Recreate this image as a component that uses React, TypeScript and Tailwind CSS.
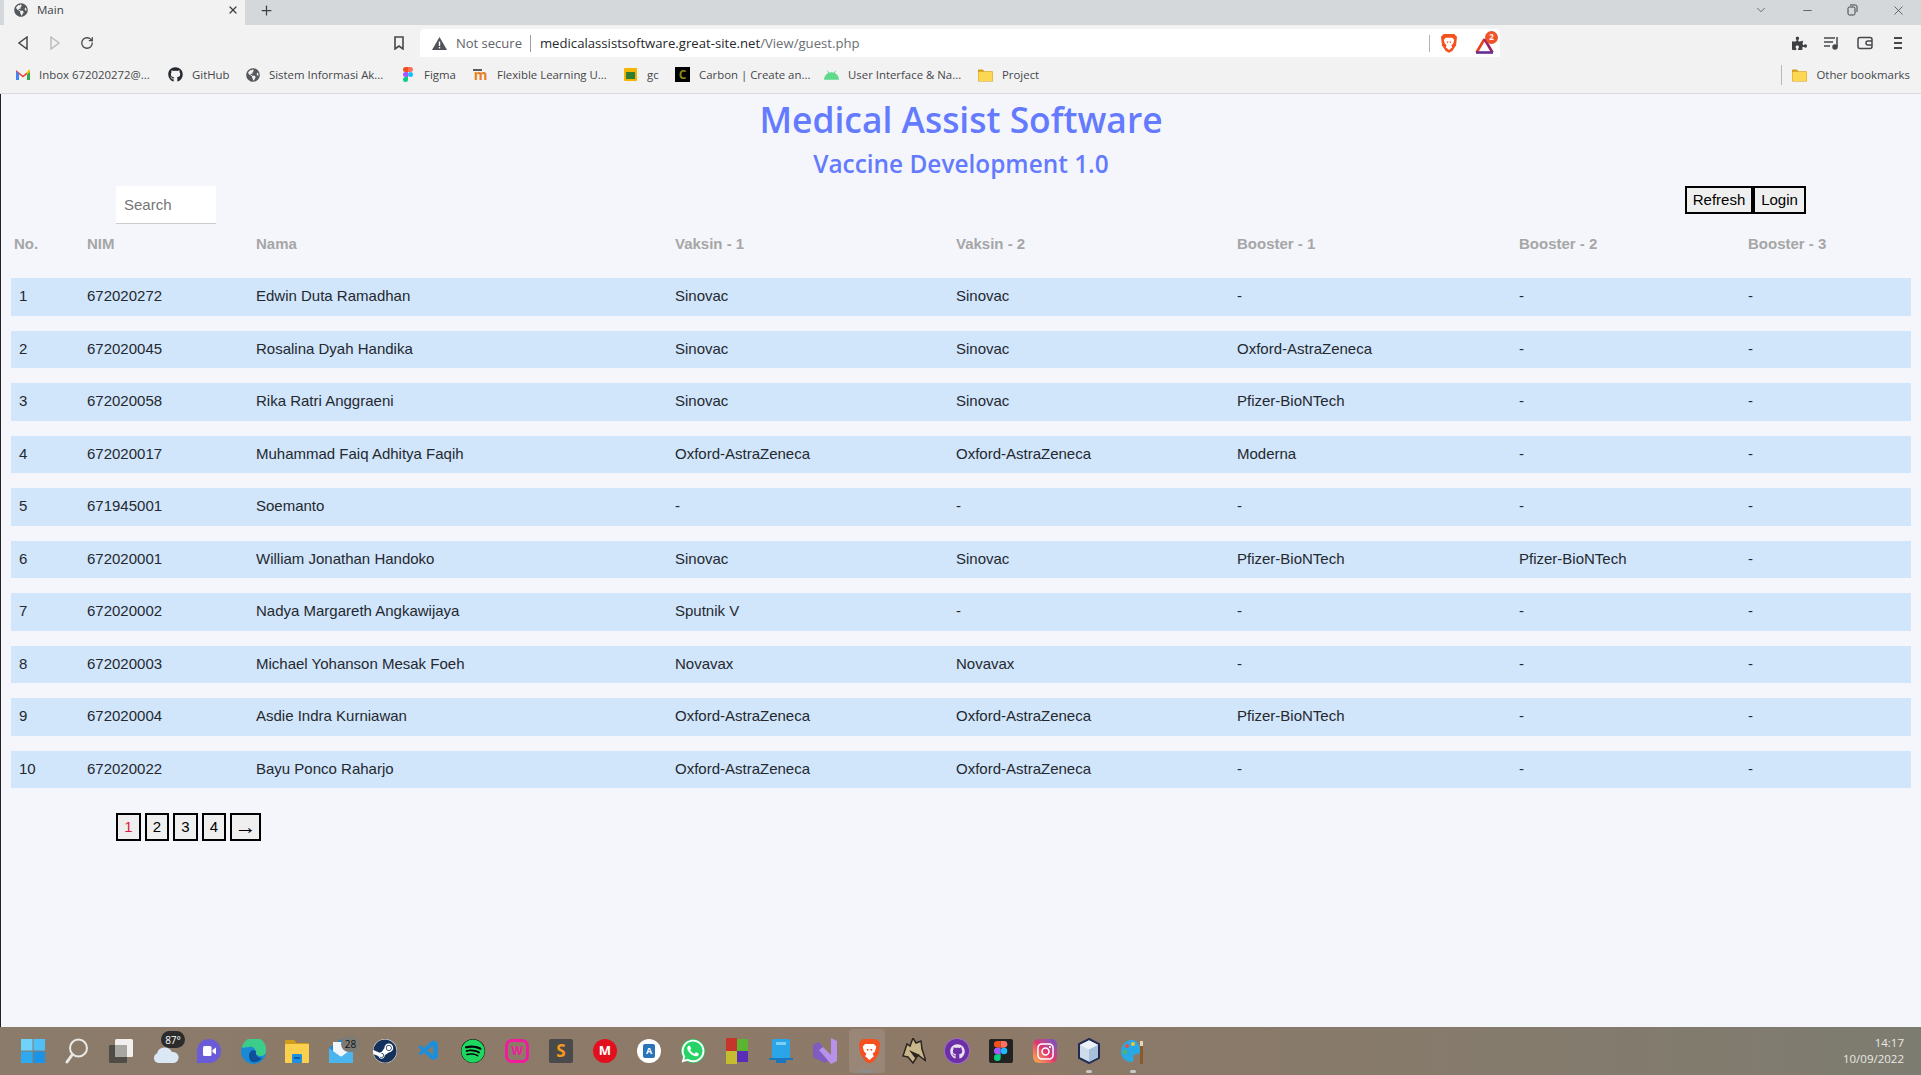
import type { ReactNode } from "react";
import { ChevronDown, Minus, Plus, RotateCw, X } from "lucide-react";
import {
  FaGithub,
  FaGlobeAmericas,
  FaPuzzlePiece,
  FaSteam,
  FaWhatsapp,
  FaInstagram,
  FaSpotify,
} from "react-icons/fa";
import { VscVscode } from "react-icons/vsc";

const rows = [
  ["1", "672020272", "Edwin Duta Ramadhan", "Sinovac", "Sinovac", "-", "-", "-"],
  ["2", "672020045", "Rosalina Dyah Handika", "Sinovac", "Sinovac", "Oxford-AstraZeneca", "-", "-"],
  ["3", "672020058", "Rika Ratri Anggraeni", "Sinovac", "Sinovac", "Pfizer-BioNTech", "-", "-"],
  ["4", "672020017", "Muhammad Faiq Adhitya Faqih", "Oxford-AstraZeneca", "Oxford-AstraZeneca", "Moderna", "-", "-"],
  ["5", "671945001", "Soemanto", "-", "-", "-", "-", "-"],
  ["6", "672020001", "William Jonathan Handoko", "Sinovac", "Sinovac", "Pfizer-BioNTech", "Pfizer-BioNTech", "-"],
  ["7", "672020002", "Nadya Margareth Angkawijaya", "Sputnik V", "-", "-", "-", "-"],
  ["8", "672020003", "Michael Yohanson Mesak Foeh", "Novavax", "Novavax", "-", "-", "-"],
  ["9", "672020004", "Asdie Indra Kurniawan", "Oxford-AstraZeneca", "Oxford-AstraZeneca", "Pfizer-BioNTech", "-", "-"],
  ["10", "672020022", "Bayu Ponco Raharjo", "Oxford-AstraZeneca", "Oxford-AstraZeneca", "-", "-", "-"],
];

const headers = ["No.", "NIM", "Nama", "Vaksin - 1", "Vaksin - 2", "Booster - 1", "Booster - 2", "Booster - 3"];
const columns = "grid grid-cols-[76px_169px_419px_281px_281px_282px_229px_163px] items-center";

function Folder() {
  return (
    <svg width="16" height="14" viewBox="0 0 16 14">
      <path d="M0 2a1 1 0 0 1 1-1h4l2 2h8a1 1 0 0 1 1 1v9a1 1 0 0 1-1 1H1a1 1 0 0 1-1-1z" fill="#d29c1c" />
      <rect x="0.5" y="3.5" width="15" height="10" rx="1" fill="#fbd752" />
    </svg>
  );
}

function Gmail() {
  return (
    <svg width="14" height="11" viewBox="0 0 14 11">
      <path d="M0 1 7 6.5 14 1V3L7 8.5 0 3z" fill="#ea4335" />
      <path d="M0 2V11H3V4.500z" fill="#4285f4" />
      <path d="M14 2V11H11V4.500z" fill="#34a853" />
      <path d="M11 3 13 0.600 14 1.500V3L11 5.500z" fill="#fbbc04" />
    </svg>
  );
}

function Figma({ size = 15 }: { size?: number }) {
  return (
    <svg width={(size * 2) / 3} height={size} viewBox="0 0 10 15">
      <path d="M5 0H2.500a2.500 2.500 0 0 0 0 5H5z" fill="#f24e1e" />
      <path d="M5 0h2.500a2.500 2.500 0 0 1 0 5H5z" fill="#ff7262" />
      <path d="M5 5H2.500a2.500 2.500 0 0 0 0 5H5z" fill="#a259ff" />
      <circle cx="7.500" cy="7.500" r="2.500" fill="#1abcfe" />
      <path d="M5 10H2.500A2.500 2.500 0 1 0 5 12.500z" fill="#0acf83" />
    </svg>
  );
}

function BraveLion({ size = 17 }: { size?: number }) {
  return (
    <svg width={size} height={(size * 20) / 17} viewBox="0 0 17 20">
      <path d="M3 0h11l3 3-1 9-4 6-3.500 2L5 18l-4-6L0 3z" fill="#f4511e" />
      <path d="M5 4h7l2 2-1 4-2 2 1 2-3.500 3L5 14l1-2-2-2-1-4z" fill="#fff" />
      <path d="M6 8h2l-1 2zM9 8h2l-1 2z" fill="#f4511e" />
    </svg>
  );
}

function BatIcon() {
  return (
    <div className="relative h-[20px] w-[20px]">
      <svg width="19" height="17" viewBox="0 0 19 17" className="absolute bottom-0 left-0" fill="none" strokeWidth="2.6">
        <path d="M9.500 2 1.500 15.500" stroke="#e8401c" />
        <path d="M9.500 2 17.500 15.500" stroke="#9e1f63" />
        <path d="M1 15.500H18" stroke="#662d91" />
      </svg>
      <span className="absolute -right-[3px] -top-[3px] flex h-[13px] w-[13px] items-center justify-center rounded-full bg-[#f0532a] text-[8px] font-bold text-white">
        2
      </span>
    </div>
  );
}

function Bookmark({ icon, label, width }: { icon: ReactNode; label: string; width: string }) {
  return (
    <div className={`flex items-center gap-[9px] ${width}`}>
      <span className="flex w-[15px] shrink-0 justify-center">{icon}</span>
      <span className="whitespace-nowrap text-[11.4px] text-[#45474a]">{label}</span>
    </div>
  );
}

function BrowserChrome() {
  return (
    <header className="font-['Open_Sans',sans-serif] border-b border-[#d8dae0]">
      {/* Tab strip */}
      <div className="flex h-[25px] items-center bg-[#d5d8db]">
        <div className="ml-[4px] flex h-full w-[241px] items-center bg-[#f2f2f2] pb-[5px] pl-[10px] pr-[6px]">
          <FaGlobeAmericas className="text-[14px] text-[#55585c]" />
          <span className="ml-[9px] flex-1 text-[11.5px] text-[#3c4043]">Main</span>
          <X size={12} strokeWidth={2.5} className="text-[#3c4043]" />
        </div>
        <Plus size={15} strokeWidth={2} className="mb-[5px] ml-[14px] text-[#3c4043]" />
        <div className="mb-[5px] ml-auto flex items-center gap-[33px] pr-[15px] text-[#3c4043]">
          <ChevronDown size={14} strokeWidth={1.2} />
          <Minus size={13} strokeWidth={1.4} />
          <svg width="11" height="12" viewBox="0 0 11 12" fill="none" stroke="#3c4043">
            <rect x="1" y="3" width="7" height="8" rx="1.5" />
            <path d="M3 1h5.500A1.500 1.500 0 0 1 10 2.500V8" />
          </svg>
          <X size={15} strokeWidth={1.2} />
        </div>
      </div>
      {/* Toolbar */}
      <div className="flex h-[32px] items-end bg-[#f2f2f2]">
        <div className="flex h-full w-[420px] items-center pl-[18px] pt-[4px]">
          <svg width="10" height="14" viewBox="0 0 10 14" fill="none" stroke="#46484b" strokeWidth="1.5">
            <path d="M9 1 1 7 9 13z" />
          </svg>
          <svg className="ml-[22px]" width="10" height="14" viewBox="0 0 10 14" fill="none" stroke="#bcbdbf" strokeWidth="1.5">
            <path d="M1 1 9 7 1 13z" />
          </svg>
          <RotateCw size={14} strokeWidth={2.2} className="ml-[20px] text-[#46484b]" />
          <svg className="ml-[300px]" width="10" height="14" viewBox="0 0 10 14" fill="none" stroke="#46484b" strokeWidth="1.6">
            <path d="M1 1h8v12L5 10l-4 3z" />
          </svg>
        </div>
        <div className="flex h-[28px] w-[1080px] items-center rounded-t-[5px] bg-white pl-[12px] pt-[1px] text-[13.15px]">
          <svg width="15" height="13" viewBox="0 0 15 13">
            <path d="M7.500 0 15 13H0z" fill="#505357" />
            <rect x="6.800" y="4.500" width="1.400" height="4.500" fill="#fff" />
            <rect x="6.800" y="10" width="1.400" height="1.400" fill="#fff" />
          </svg>
          <span className="ml-[9px] text-[13px] text-[#5f6368]">Not secure</span>
          <span className="ml-[8px] h-[17px] w-px bg-[#9a9ca0]" />
          <span className="ml-[9px] text-[#26282b]">medicalassistsoftware.great-site.net</span>
          <span className="text-[#6b6e72]">/View/guest.php</span>
          <span className="ml-auto h-[17px] w-px bg-[#b0b2b5]" />
          <span className="ml-[11px]">
            <BraveLion size={16} />
          </span>
          <span className="ml-[18px] mr-[5px]">
            <BatIcon />
          </span>
        </div>
        <div className="flex h-full flex-1 items-center gap-[17px] pl-[292px] pt-[4px] text-[#46484b]">
          <FaPuzzlePiece className="text-[15px] text-[#3d3f42]" />
          <svg width="16" height="14" viewBox="0 0 16 14" fill="none" stroke="#46484b" strokeWidth="1.5">
            <path d="M0 2h11M0 6h9M0 10h6M13 1v10" />
            <circle cx="11" cy="11" r="2" fill="#46484b" />
          </svg>
          <svg width="16" height="14" viewBox="0 0 16 14" fill="none" stroke="#46484b" strokeWidth="1.5">
            <rect x="1" y="1.500" width="14" height="11" rx="2" />
            <path d="M15 5h-4a2 2 0 0 0 0 4h4" />
          </svg>
          <svg className="ml-[2px]" width="12" height="14" viewBox="0 0 12 14" stroke="#46484b" strokeWidth="2">
            <path d="M2 2h8M2 7h8M2 12h8" />
          </svg>
        </div>
      </div>
      {/* Bookmarks bar */}
      <div className="flex h-[36px] items-center bg-[#f2f2f2] pl-[15px]">
        <Bookmark width="w-[153px]" icon={<Gmail />} label="Inbox 672020272@..." />
        <Bookmark width="w-[77px]" icon={<FaGithub className="text-[15px] text-[#24292f]" />} label="GitHub" />
        <Bookmark width="w-[155px]" icon={<FaGlobeAmericas className="text-[14px] text-[#55585c]" />} label="Sistem Informasi Ak..." />
        <Bookmark width="w-[73px]" icon={<Figma />} label="Figma" />
        <Bookmark
          width="w-[150px]"
          icon={
            <span className="relative text-[14px] font-bold leading-none text-[#e8801e]">
              m
              <span className="absolute -left-[1px] top-[1px] h-[2px] w-[9px] bg-[#5c5c5c]" />
            </span>
          }
          label="Flexible Learning U..."
        />
        <Bookmark
          width="w-[52px]"
          icon={
            <span className="flex h-[13px] w-[13px] items-end justify-center rounded-[1px] bg-[#f4b400] p-[2px]">
              <span className="h-[7px] w-[9px] bg-[#2e7d32]" />
            </span>
          }
          label="gc"
        />
        <Bookmark
          width="w-[149px]"
          icon={
            <span className="flex h-[15px] w-[15px] items-center justify-center bg-black text-[12px] font-bold leading-none text-[#8a8a12]">
              C
            </span>
          }
          label="Carbon | Create an..."
        />
        <Bookmark
          width="w-[154px]"
          icon={
            <svg width="16" height="10" viewBox="0 0 16 10">
              <path d="M0 10a8 8 0 0 1 16 0z" fill="#5fd98a" />
              <path d="M3.500 0.500 5.500 3.500M12.500 0.500 10.500 3.500" stroke="#5fd98a" />
            </svg>
          }
          label="User Interface & Na..."
        />
        <Bookmark width="w-[70px]" icon={<Folder />} label="Project" />
        <div className="ml-auto flex h-[20px] items-center pr-[11px]">
          <span className="mr-[10px] h-[20px] w-px bg-[#b5b7ba]" />
          <Bookmark width="w-auto" icon={<Folder />} label="Other bookmarks" />
        </div>
      </div>
    </header>
  );
}

function Rounded({ className, children }: { className: string; children?: ReactNode }) {
  return <span className={`flex h-[24px] w-[24px] items-center justify-center ${className}`}>{children}</span>;
}

function Badge({ text, className }: { text: string; className: string }) {
  return (
    <span className={`absolute flex items-center justify-center rounded-full px-[3px] text-[10px] leading-none ${className}`}>
      {text}
    </span>
  );
}

const taskIcons: ReactNode[] = [
  <svg key="win" width="24" height="24" viewBox="0 0 24 24">
    <rect width="11.500" height="11.500" fill="#6fd3fb" />
    <rect x="12.500" width="11.500" height="11.500" fill="#4fc0f8" />
    <rect y="12.500" width="11.500" height="11.500" fill="#2fa9f0" />
    <rect x="12.500" y="12.500" width="11.500" height="11.500" fill="#1b93e6" />
  </svg>,
  <svg key="search" width="24" height="26" viewBox="0 0 24 26" fill="none" stroke="#e9e9e6" strokeLinecap="round">
    <circle cx="13.500" cy="10" r="8.500" strokeWidth="2" />
    <path d="M7 17 2 24" strokeWidth="3" />
  </svg>,
  <svg key="task" width="24" height="24" viewBox="0 0 24 24">
    <rect x="6" y="0" width="18" height="18" rx="1.500" fill="#f2f0ee" />
    <rect x="0" y="6" width="18" height="18" rx="1.500" fill="#45443f" opacity="0.85" />
    <rect x="6" y="6" width="12" height="12" fill="#a9a7a2" />
  </svg>,
  <div key="weather" className="relative h-[24px] w-[24px]">
    <svg width="26" height="18" viewBox="0 0 26 18" className="absolute bottom-0 left-0">
      <path d="M5 18a5 5 0 0 1-1-9.500A8 8 0 0 1 19 7a5.500 5.500 0 0 1 2 11z" fill="#dbe7f4" />
    </svg>
    <Badge text="87°" className="left-[8px] -top-[8px] h-[17px] w-[24px] bg-[#2b2b2b] text-white" />
  </div>,
  <Rounded key="meet" className="rounded-full rounded-bl-[4px] bg-[#6a5bd8]">
    <svg width="13" height="10" viewBox="0 0 13 10" fill="#fff">
      <rect width="8.500" height="10" rx="1.500" />
      <path d="M9.500 4 13 1.500V8.500L9.500 6z" />
    </svg>
  </Rounded>,
  <svg key="edge" width="25" height="25" viewBox="0 0 25 25">
    <circle cx="12.500" cy="12.500" r="12.500" fill="#1a8ad4" />
    <path d="M1 9A12 12 0 0 1 25 12c0 3-2 5-5 5-4 0-5-2-5-3 0-4-3-7-7-6-3 0-6 1-7 1z" fill="#3ccd8a" />
    <path d="M8 17c0-4 3-7 7-5-1 3 1 7 6 7-3 4-7 5-10 4-2-1-3-3-3-6z" fill="#0f4f9a" />
  </svg>,
  <svg key="files" width="24" height="24" viewBox="0 0 24 24">
    <path d="M0 2a1 1 0 0 1 1-1h8l3 3h11a1 1 0 0 1 1 1v4H0z" fill="#d29c1c" />
    <rect y="5" width="24" height="19" rx="1" fill="#fbd04f" />
    <rect x="7" y="15" width="10" height="9" rx="1" fill="#1f8fe0" />
    <rect x="9" y="18" width="6" height="2" fill="#0d5ea8" />
  </svg>,
  <div key="mail" className="relative h-[24px] w-[24px]">
    <svg width="24" height="24" viewBox="0 0 24 24">
      <path d="M0 9 12 0l12 9v15H0z" fill="#1e88d6" />
      <path d="M4 3h16v10L12 18 4 13z" fill="#f2f6fa" />
      <path d="M0 9 12 18 24 9v15H0z" fill="#4bb5ee" />
    </svg>
    <Badge text="28" className="left-[12px] -top-[3px] h-[16px] w-[19px] bg-[#7c7b76] text-[#111]" />
  </div>,
  <span key="steam" className="flex h-[24px] w-[24px] items-center justify-center rounded-full bg-white">
    <FaSteam className="text-[24px] text-[#14315c]" />
  </span>,
  <VscVscode key="vscode" className="text-[24px] text-[#1c8fdc]" />,
  <span key="spotify" className="flex h-[24px] w-[24px] items-center justify-center rounded-full bg-black">
    <FaSpotify className="text-[24px] text-[#1ed760]" />
  </span>,
  <Rounded key="wamp" className="rounded-[7px] border-[3px] border-[#f01b9d] text-[12px] font-bold text-[#f01b9d]">
    W
  </Rounded>,
  <Rounded key="sublime" className="rounded-[2px] bg-[#4a4a4a] text-[17px] font-bold text-[#f79a1b]">
    S
  </Rounded>,
  <Rounded key="mega" className="rounded-full bg-[#e2101d] text-[13px] font-bold text-white">
    M
  </Rounded>,
  <Rounded key="word" className="rounded-full bg-white">
    <span className="flex h-[14px] w-[12px] items-center justify-center rounded-[2px] bg-[#2a74b8] text-[9px] font-bold text-white">
      A
    </span>
  </Rounded>,
  <span key="whatsapp" className="flex h-[24px] w-[24px] items-center justify-center rounded-full bg-[#25d366]">
    <FaWhatsapp className="text-[26px] text-white" />
  </span>,
  <svg key="squares" width="24" height="26" viewBox="0 0 24 26">
    <rect x="1" y="0" width="11" height="13" fill="#c6342c" />
    <rect x="12" y="1" width="11" height="12" fill="#5cb531" />
    <rect x="1" y="13" width="11" height="13" fill="#c4bd2f" />
    <rect x="12" y="13" width="11" height="11" fill="#5a2db8" />
  </svg>,
  <svg key="device" width="24" height="24" viewBox="0 0 24 24">
    <rect x="3" y="0" width="18" height="19" rx="1.500" fill="#2aa5e8" />
    <rect x="7" y="3" width="10" height="3" fill="#7dd0f5" />
    <rect x="0" y="19" width="24" height="2" fill="#1a76bd" />
    <rect x="7" y="21" width="10" height="3" fill="#1a76bd" />
  </svg>,
  <svg key="vs" width="24" height="26" viewBox="0 0 24 26">
    <path d="M0 7 6 4l12 16-6 5-12-6z" fill="#7e5cc0" />
    <path d="M18 0 24 3v20l-6 3-12-14 4-3 8 8z" fill="#b892ea" />
  </svg>,
  <BraveLion key="brave" size={21} />,
  <svg key="helmet" width="25" height="26" viewBox="0 0 25 26">
    <path d="M2 18 6 6l3 2 3-8 3 5 5-2 1 8 4 12-8-6-5 8-5-6z" fill="#c9b68c" stroke="#2b2620" strokeWidth="1.500" />
    <path d="M8 12l6 8 5-3z" fill="#2b2620" />
  </svg>,
  <span key="ghd" className="flex h-[24px] w-[24px] items-center justify-center rounded-full bg-[#6c2fa6] ring-1 ring-[#9a6ccb]">
    <FaGithub className="text-[15px] text-[#e9e0f2]" />
  </span>,
  <Rounded key="figma" className="rounded-[2px] bg-[#222222]">
    <Figma size={20} />
  </Rounded>,
  <Rounded key="insta" className="rounded-[6px] bg-gradient-to-tr from-[#fdb43a] via-[#e1306c] to-[#6a47d0]">
    <FaInstagram className="text-[19px] text-white" />
  </Rounded>,
  <svg key="cube" width="24" height="26" viewBox="0 0 24 26">
    <path d="M12 1 22 6v14l-10 5L2 20V6z" fill="#cfdcec" stroke="#1f2a55" strokeWidth="2" />
    <path d="M3 7 12 11.500 21 7 12 2.500z" fill="#eef3f9" />
    <path d="M12 11.500V24L21 19.500V7z" fill="#a9c0dc" />
  </svg>,
  <svg key="paint" width="25" height="26" viewBox="0 0 25 26">
    <path d="M11 2C4 2 0 8 0 14c0 6 5 10 10 10 3 0 3-3 2-5 0-2 2-3 5-3 1 0 2-1 2-4 0-6-4-10-8-10z" fill="#28a9e6" />
    <circle cx="6" cy="8" r="2" fill="#e8503a" />
    <circle cx="12" cy="6" r="2" fill="#f6c431" />
    <circle cx="4" cy="14" r="2" fill="#57b947" />
    <rect x="19" y="8" width="3" height="18" fill="#8a5a2b" />
    <rect x="19" y="3" width="3" height="5" fill="#e7d7b2" />
  </svg>,
];

function Taskbar() {
  return (
    <footer className="flex h-[48px] shrink-0 items-center bg-gradient-to-r from-[#8b7b6a] via-[#8e7967] to-[#7d7c70] pl-[11px] pr-[17px] font-['Open_Sans',sans-serif]">
      {taskIcons.map((icon, i) => (
        <div key={i} className="relative flex h-[44px] w-[44px] items-center justify-center">
          {i === 19 && <span className="absolute left-[2px] top-0 h-[44px] w-[36px] rounded-[4px] bg-white/10" />}
          <span className="relative flex items-center justify-center">{icon}</span>
          {i === 19 && <span className="absolute bottom-0 left-[12px] h-[3px] w-[16px] rounded-full bg-[#8d8d8d]" />}
          {i >= 24 && <span className="absolute bottom-0 left-[19px] h-[3px] w-[6px] rounded-full bg-[#c9c9c9]" />}
        </div>
      ))}
      <div className="ml-auto text-right text-[11.5px] leading-[16px] text-[#e9e9e4]">
        <div>14:17</div>
        <div>10/09/2022</div>
      </div>
    </footer>
  );
}

function PageButton({ children, className = "" }: { children: ReactNode; className?: string }) {
  return (
    <button className={`h-[28px] border-2 border-black bg-[#efefef] text-[15px] ${className}`}>
      {children}
    </button>
  );
}

export default function App() {
  return (
    <div className="flex h-[1075px] flex-col overflow-hidden bg-[#f4f6fb]">
      <BrowserChrome />
      <main className="flex-1 border-l border-[#222] font-['Liberation_Sans',sans-serif] text-[15px] text-[#24292f]">
        <h1 className="h-[50px] text-center font-['Open_Sans',sans-serif] text-[35.4px] font-semibold leading-[50px] text-[#647aff]">
          Medical Assist Software
        </h1>
        <h2 className="h-[42px] text-center font-['Open_Sans',sans-serif] text-[24.4px] font-semibold leading-[40px] text-[#647aff]">
          Vaccine Development 1.0
        </h2>

        <div className="flex items-start justify-between pl-[115px] pr-[115px]">
          <div className="flex h-[38px] w-[100px] items-center border-b border-[#cccccc] bg-white pl-[8px] pt-[1px] text-[#757575]">
            Search
          </div>
          <div className="flex">
            <PageButton className="w-[68px] text-black">Refresh</PageButton>
            <PageButton className="w-[53px] text-black">Login</PageButton>
          </div>
        </div>

        <div className="ml-[10px] w-[1900px]">
          <div className={`${columns} mb-[14px] h-[40px] font-bold text-[#a6a6a6]`}>
            {headers.map((h, i) => (
              <span key={h} className={i === 0 ? "pl-[3px]" : ""}>
                {h}
              </span>
            ))}
          </div>

          <div className="flex flex-col gap-[15px]">
            {rows.map((row) => (
              <div key={row[0]} className={`${columns} h-[37.5px] bg-[#d1e5fb] pb-[1px]`}>
                {row.map((cell, i) => (
                  <span key={i} className={i === 0 ? "pl-[8px]" : ""}>
                    {cell}
                  </span>
                ))}
              </div>
            ))}
          </div>
        </div>

        <div className="ml-[115px] mt-[25px] flex gap-[4px]">
          <PageButton className="w-[25px] text-[#e0183f]">1</PageButton>
          <PageButton className="w-[24px] text-black">2</PageButton>
          <PageButton className="w-[25px] text-black">3</PageButton>
          <PageButton className="w-[24px] text-black">4</PageButton>
          <PageButton className="w-[31px] text-[22px] leading-none text-black">→</PageButton>
        </div>
      </main>
      <Taskbar />
    </div>
  );
}
